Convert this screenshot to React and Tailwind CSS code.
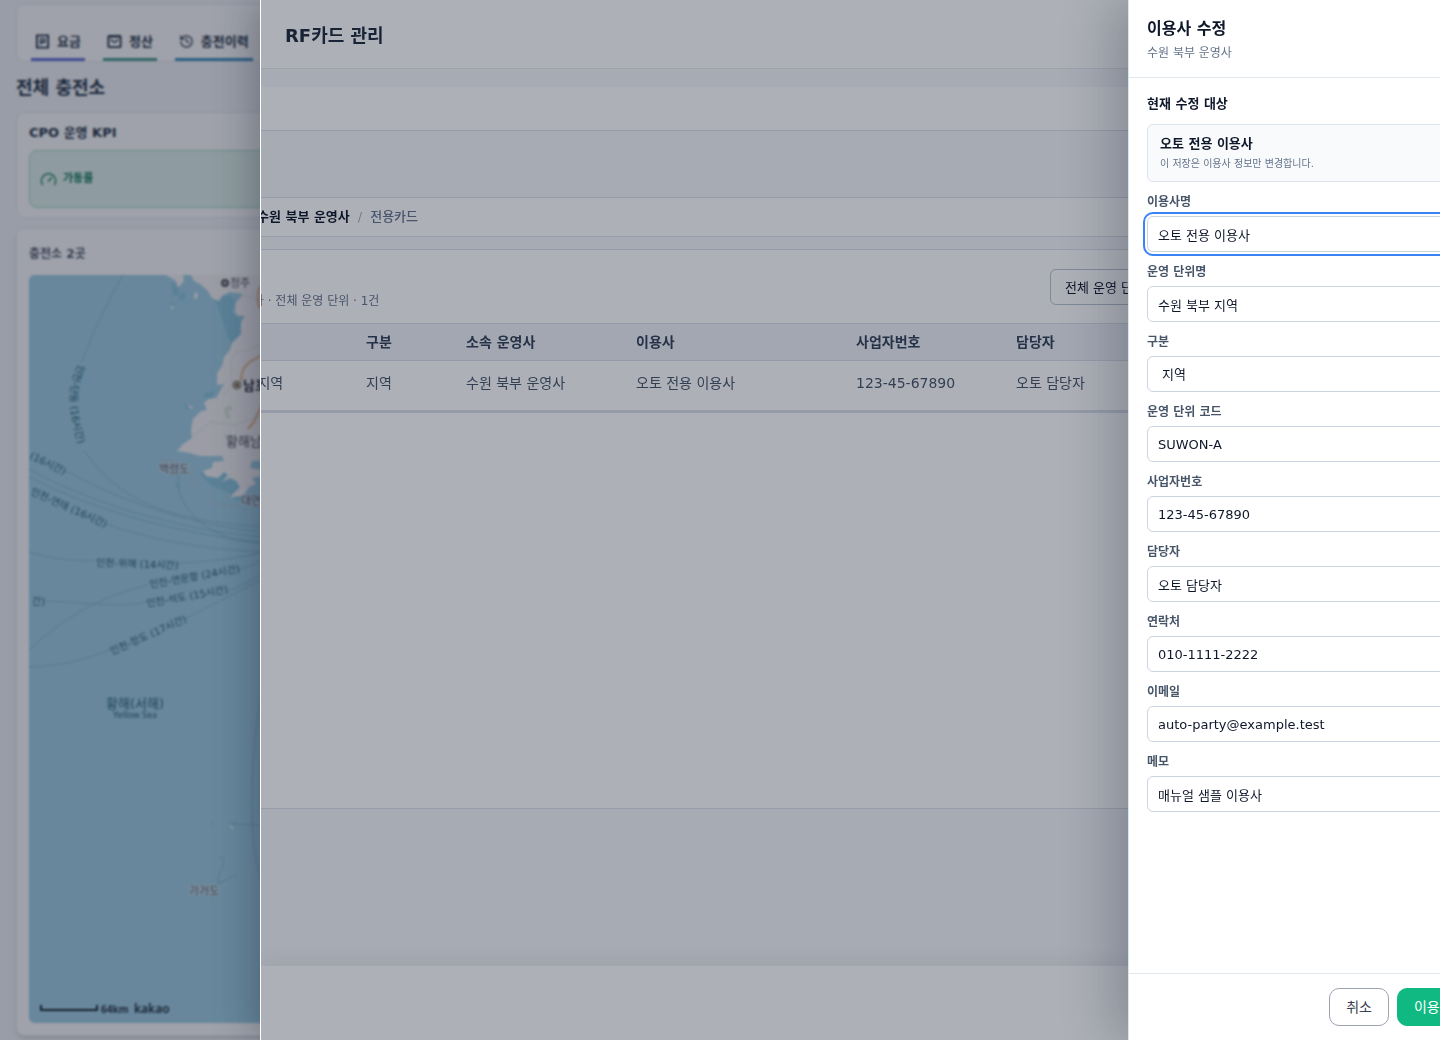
import React from 'react';
import { History, Gauge } from 'lucide-react';
import clsx from 'clsx';

function BillIcon({ size }) {
  return (
    <svg width={size} height={size} viewBox="0 0 16 16" fill="none" stroke="currentColor" strokeWidth="2" className="shrink-0">
      <path d="M2 1.5 h12 v13 h-12z" />
      <path d="M6 4 v8 M6 5 h4.5 v4 h-4.5 M5 8 h5" strokeWidth="1.3" />
    </svg>
  );
}

function MailBoxIcon({ size }) {
  return (
    <svg width={size} height={size} viewBox="0 0 16 16" fill="none" stroke="currentColor" strokeWidth="2" strokeLinejoin="round" className="shrink-0">
      <rect x="1.5" y="2" width="13" height="12" rx="1" />
      <path d="M2 3 h12 M4 6 l4 3 4 -3" strokeWidth="1.5" />
    </svg>
  );
}

const tabs = [
  { icon: BillIcon, label: '요금', line: 'border-[#6370d8]' },
  { icon: MailBoxIcon, label: '정산', line: 'border-[#4a9c8c]' },
  { icon: History, label: '충전이력', line: 'border-[#3f90bd]' },
];

const columns = [
  { label: '운영 단위', value: '수원 북부 지역', width: 'w-[169px]' },
  { label: '구분', value: '지역', width: 'w-[100px]' },
  { label: '소속 운영사', value: '수원 북부 운영사', width: 'w-[170px]' },
  { label: '이용사', value: '오토 전용 이용사', width: 'w-[220px]' },
  { label: '사업자번호', value: '123-45-67890', width: 'w-[160px]' },
  { label: '담당자', value: '오토 담당자', width: 'w-[440px]' },
];

const fields = [
  { id: 'name', label: '이용사명', value: '오토 전용 이용사', active: true },
  { id: 'unit', label: '운영 단위명', value: '수원 북부 지역' },
  { id: 'type', label: '구분', value: '지역', options: ['지역', '본부', '지점'] },
  { id: 'code', label: '운영 단위 코드', value: 'SUWON-A' },
  { id: 'biz', label: '사업자번호', value: '123-45-67890' },
  { id: 'manager', label: '담당자', value: '오토 담당자' },
  { id: 'phone', label: '연락처', value: '010-1111-2222' },
  { id: 'email', label: '이메일', value: 'auto-party@example.test' },
  { id: 'memo', label: '메모', value: '매뉴얼 샘플 이용사' },
];

const routes = [
  'M123 275 C102 312 90 340 82 362',
  'M84 450 C125 512 190 522 275 528',
  'M64 470 C120 500 190 527 275 533',
  'M29 469 C100 508 190 532 275 538',
  'M29 477 C100 513 190 537 275 543',
  'M107 524 C150 540 210 551 275 552',
  'M29 552 C50 558 70 561 95 561',
  'M178 563 C210 562 240 558 275 550',
  'M29 650 C70 612 105 596 148 585',
  'M238 570 L275 556',
  'M46 601 C80 602 120 608 146 602',
  'M227 592 L275 568',
  'M29 667 C60 666 85 660 110 650',
  'M186 618 L275 573',
  'M180 470 C172 495 190 525 235 540 L275 545',
  'M262 690 C250 760 246 840 264 890',
  'M234 824 L275 826',
  'M220 857 C230 858 218 870 218 884 M218 884 L236 875',
];

function SeaMap() {
  return (
    <svg viewBox="29 275 260 747" className="block h-[747px] w-[260px]" fontFamily='"DejaVu Sans", "Noto Sans CJK KR", sans-serif'>
      <rect x="29" y="275" width="260" height="747" fill="#a3d3e8" />
      {/* Shallows */}
      <g fill="#8ec9e0">
        <path d="M171 282 l9 4 -2 9 -5 1z M178 294 l8 -2 -1 7 -5 2z M184 303 l4 -1 -2 3z M171 303 l4 -1 -2 4z M215 298 l14 -3 6 6 -3 12 8 6 4 -2 -4 10 2 8 -10 10 -4 -8z M182 404 l8 2 -2 5z M203 394 l12 -4 -6 14z M175 483 l5 1 -2 6z M210 823 l4 -1 -2 4z M228 823 l9 -1 -4 5z M200 474 l12 12 16 6 8 8 8 0 -4 -20 -20 -10z" />
      </g>
      {/* Coastline */}
      <path
        d="M166 275 L176 281 L178 288 L184 281 L183 275 H191 L194 281 L200 284 L208 291 L212 298 L219 301 L222 296 L230 292 L243 294 L236 303 L235 311 L237 315 L245 316 L241 322 L241 334 L232 343 L230 350 L224 357 L222 366 L217 373 L217 385 L224 384 L216 398 L208 399 L204 403 L207 410 L201 411 L193 419 L191 430 L192 438 L183 444 L177 451 L190 453 L200 456 L222 456 L224 461 L213 462 L212 468 L203 471 L206 476 L218 478 L224 472 L228 475 L222 482 L230 478 L236 481 L240 487 L230 497 L243 496 L249 487 L256 484 L252 478 L262 476 V470 L250 468 L252 461 L289 460 V275 Z"
        fill="#f8f6f7"
      />
      <path d="M195 292 l3 2 -2 6 -2 -3z M187 405 l6 2 -2 2z M171 306 l3 1 -2 3z M230 825 l3 1 -1 4z" fill="#f8f6f7" />
      <path d="M224 409 l6 -4 3 4 -5 3 3 5 -5 2z M223 436 l6 -2 -2 5z" fill="#dbe7dc" />
      <g fill="none" stroke="#e4e2e6" strokeWidth="1">
        <path d="M262 345 L248 350 L236 352 L231 362 L232 385 L224 395" />
        <path d="M196 434 L210 422 L235 425 L262 415" />
        <path d="M243 295 L262 300" />
      </g>
      <g fill="none" stroke="#eab783" strokeWidth="2">
        <path d="M262 286 Q258 288 258 296 Q257 306 262 310" />
        <path d="M262 355 L250 362 Q241 368 241 381" />
        <path d="M262 405 L254 422 L248 429" />
      </g>
      <path d="M158 460 Q184 458 192 478 Q204 502 225 506 L240 506" fill="none" stroke="#c4b8bc" strokeWidth="1" strokeDasharray="4 2" />
      {routes.map((d) => (
        <path key={d} d={d} fill="none" stroke="#78acc4" strokeWidth="1" strokeDasharray="2 1" />
      ))}

      {/* Ferry route names */}
      <defs>
        <path id="dandong" d="M79 364 C64 392 70 422 84 460" />
      </defs>
      <g fontSize="10" fill="#2d6379">
        <text><textPath href="#dandong">인천-단동 (16시간)</textPath></text>
        <text x="29" y="458" transform="rotate(26 29 458)">(16시간)</text>
        <text x="30" y="494" transform="rotate(24 30 494)">인천-연태 (16시간)</text>
        <text x="96" y="566" transform="rotate(2 96 566)">인천-위해 (14시간)</text>
        <text x="150" y="588" transform="rotate(-10 150 588)">인천-연운항 (24시간)</text>
        <text x="147" y="607" transform="rotate(-10 147 607)">인천-석도 (15시간)</text>
        <text x="112" y="655" transform="rotate(-24 112 655)">인천-청도 (17시간)</text>
        <text x="32" y="605">간)</text>
      </g>

      {/* Places */}
      <circle cx="225" cy="283" r="3" fill="#b5b5b8" stroke="#55555c" strokeWidth="2" />
      <circle cx="237" cy="385" r="4" fill="#b5a888" stroke="#7e7868" strokeWidth="1" />
      <circle cx="237" cy="385" r="1" fill="#222" />
      <g fill="#4b4b55" fontSize="11">
        <text x="230" y="287">정주</text>
        <text x="243" y="390" fontSize="13" fontWeight="700" fill="#26262e">남포</text>
        <text x="226" y="446" fontSize="13">황해남도</text>
        <g fill="#4a5a68" stroke="#d3e2ea" strokeWidth="2" paintOrder="stroke">
          <text x="159" y="473">백령도</text>
          <text x="241" y="505">대연평도</text>
          <text x="189" y="895">가거도</text>
        </g>
      </g>
      <g fill="#2d6379" textAnchor="middle">
        <text x="135" y="708" fontSize="13">황해(서해)</text>
        <text x="135" y="718" fontSize="9" fontFamily='"Noto Sans", sans-serif'>Yellow Sea</text>
      </g>

      {/* Scale */}
      <path d="M41 1005 V1010 H97 V1005" fill="none" stroke="#1d2530" strokeWidth="2" />
      <text x="101" y="1013" fontSize="10" fontWeight="700" fontFamily='"Noto Sans", sans-serif' fill="#2b3440">64km</text>
      <text x="134" y="1013" fontSize="12" fontWeight="600" fontFamily='"Noto Sans", sans-serif' fill="#1d2530">kakao</text>
    </svg>
  );
}

function Dashboard() {
  return (
    <div className="flex h-full flex-col bg-[#f4f7fa] px-4 pt-1 pb-1 text-[#273449] blur-[1px]">
      <nav className="flex h-[58px] shrink-0 items-end gap-[18px] rounded-lg border border-[#e9eaf2] bg-white px-3.5">
        {tabs.map(({ icon: Icon, label, line }) => (
          <button key={label} className={clsx('flex h-9 shrink-0 items-center gap-[7px] border-b-3 px-1 text-[13px] font-bold', line)}>
            <Icon size={15} />
            {label}
          </button>
        ))}
      </nav>
      <h1 className="mt-3 text-lg leading-7 font-bold">전체 충전소</h1>

      <section className="mt-2.5 h-[106px] shrink-0 rounded-lg border border-[#e9eaf2] bg-white px-3 pt-2.5">
        <h2 className="text-[13px] leading-5 font-bold">CPO 운영 KPI</h2>
        <div className="mt-[7px] flex h-[58px] items-center gap-1.5 rounded-lg border border-[#a7dcc8] bg-[#e3f4ee] px-2.5 text-[11px] font-bold text-[#12795b]">
          <Gauge size={17} />
          가동률
        </div>
      </section>

      <section className="mt-2.5 flex min-h-0 flex-1 flex-col rounded-lg border border-[#e9eaf2] bg-white px-3 pt-[15px] pb-3 shadow-md">
        <h2 className="text-xs leading-5 font-bold text-[#4b5568]">충전소 2곳</h2>
        <div className="mt-[11px] min-h-0 flex-1 overflow-hidden rounded-md bg-[#a3d3e8]">
          <SeaMap />
        </div>
      </section>
    </div>
  );
}

function CardPanel() {
  return (
    <section className="absolute inset-y-0 right-0 left-[260px] overflow-hidden border-l border-white bg-[#f5f8fa] shadow-[-8px_0_36px_rgba(15,23,42,0.3)]">
      <div className="flex h-full flex-col">
        <header className="flex h-[69px] shrink-0 items-center border-b border-[#e5e8ef] bg-white px-6 pt-1">
          <h2 className="text-lg font-bold text-[#1e293b]">RF카드 관리</h2>
        </header>
        <div className="mt-[18px] h-11 shrink-0 border-b border-[#dbe0e9] bg-white" />
        <nav className="mt-[66px] -ml-1 flex h-10 shrink-0 items-center gap-2 border-y border-[#dbe0e9] bg-white text-[13px]">
          <a href="#operator" className="font-bold text-[#0f172a]">수원 북부 운영사</a>
          <span className="text-[#a8b0bf]">/</span>
          <a href="#cards" className="font-medium text-[#64748b]">전용카드</a>
        </nav>

        <div className="mt-3 flex h-[560px] shrink-0 flex-col border-y border-[#dbe0e9] bg-white">
          <div className="flex h-[73px] shrink-0 items-center">
            <p className="-ml-[82px] flex-1 pt-7 text-xs text-[#64748b]">수원 북부 운영사 · 전체 운영 단위 · 1건</p>
            <select aria-label="운영 단위" className="mr-[190px] h-9 w-[200px] shrink-0 rounded-md border border-[#b9c4d3] bg-white px-2.5 pt-px text-[13px] text-[#0f172a]">
              <option>전체 운영 단위</option>
            </select>
          </div>
          <table className="-ml-20 w-[1259px] table-fixed text-left text-sm">
            <thead>
              <tr className="h-[37px] border-y border-[#dbe0e9] bg-[#eff2f8] text-[#334155]">
                {columns.map((c) => (
                  <th key={c.label} className={clsx('px-4 font-bold', c.width)}>{c.label}</th>
                ))}
              </tr>
            </thead>
            <tbody>
              <tr className="h-[51px] border-b-3 border-[#dbe0e9] text-[#475569]">
                {columns.map((c) => (
                  <td key={c.label} className="px-4 pb-1.5">{c.value}</td>
                ))}
              </tr>
            </tbody>
          </table>
        </div>
        <div className="min-h-0 flex-1" />
        <footer className="h-[74px] shrink-0 bg-white shadow-[0_-6px_18px_rgba(15,23,42,0.06)]" />
      </div>
      <div className="absolute inset-0 bg-slate-900/34" />
    </section>
  );
}

function Field({ field }) {
  const box = clsx(
    'h-9 w-full rounded-md border border-[#cbd5e1] bg-white text-[13px] text-[#0f172a]',
    field.active && 'outline-2 outline-offset-2 outline-[#3b82f6]'
  );
  return (
    <div className="flex flex-col gap-1.5">
      <label htmlFor={field.id} className="text-xs leading-4 font-bold text-[#475569]">{field.label}</label>
      {field.options ? (
        <select id={field.id} defaultValue={field.value} className={clsx(box, 'px-2.5')}>
          {field.options.map((o) => <option key={o}>{o}</option>)}
        </select>
      ) : (
        <input id={field.id} type="text" defaultValue={field.value} className={clsx(box, 'px-2.5')} />
      )}
    </div>
  );
}

function EditDrawer() {
  return (
    <aside className="absolute inset-y-0 right-0 w-[312px] overflow-hidden border-l border-[#dbe3ee] bg-white shadow-[-16px_0_48px_rgba(15,23,42,0.24)]">
      <form className="flex h-full w-[419px] flex-col" onSubmit={(e) => e.preventDefault()}>
        <header className="h-[78px] shrink-0 border-b border-[#e2e8f0] px-[18px] pt-[17px]">
          <h2 className="text-base leading-6 font-bold text-[#0f172a]">이용사 수정</h2>
          <p className="mt-1 text-xs leading-4 text-[#64748b]">수원 북부 운영사</p>
        </header>

        <div className="flex-1 px-[18px] pt-4">
          <h3 className="text-[13px] leading-5 font-bold text-[#0f172a]">현재 수정 대상</h3>
          <div className="mt-2.5 mb-3 h-[58px] rounded-md border border-[#dbe3ee] bg-[#f8fafc] px-3 pt-[11px]">
            <p className="text-[13px] leading-4 font-bold text-[#0f172a]">오토 전용 이용사</p>
            <p className="mt-1 text-[10px] leading-4 text-[#64748b]">이 저장은 이용사 정보만 변경합니다.</p>
          </div>
          <div className="flex flex-col gap-3">
            {fields.map((f) => <Field key={f.id} field={f} />)}
          </div>
        </div>

        <footer className="flex h-[67px] shrink-0 justify-end gap-2 border-t border-[#e2e8f0] px-[18px] pt-3.5 text-sm">
          <button type="button" className="h-[38px] rounded-[10px] border border-[#9ca3af] bg-white px-4 text-[#374151]">취소</button>
          <button type="submit" className="h-[38px] rounded-[10px] border border-[#10b981] bg-[#10b981] px-4 text-white">이용사 정보 저장</button>
        </footer>
      </form>
    </aside>
  );
}

export default function App() {
  return (
    <div className='relative h-screen overflow-hidden bg-[#f4f7fa] font-["DejaVu_Sans","Noto_Sans_CJK_KR",sans-serif]'>
      <Dashboard />
      <div className="absolute inset-0 bg-slate-900/40" />
      <CardPanel />
      <EditDrawer />
    </div>
  );
}
